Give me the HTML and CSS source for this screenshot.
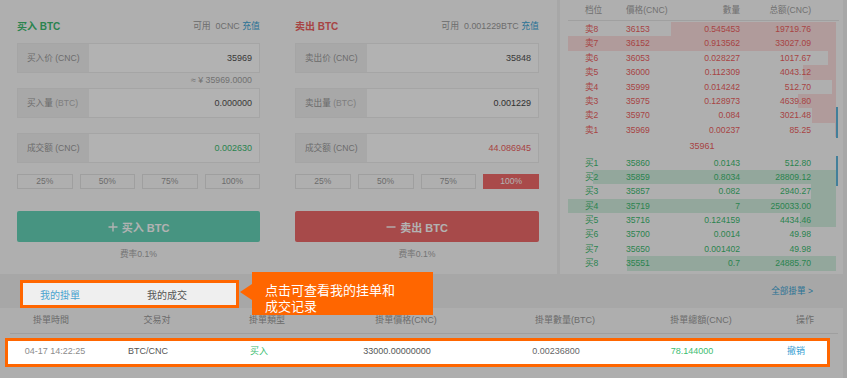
FILE: index.html
```html
<!DOCTYPE html>
<html lang="zh">
<head>
<meta charset="utf-8">
<title>BTC 交易</title>
<link rel="stylesheet" href="styles.css">
</head>
<body>
<div class="page">
  <div class="top">
    <div class="trade">
      <section class="side side-buy">
        <div class="side-head">
          <span class="side-title up">买入 BTC</span>
          <span class="avail">可用 &nbsp;0CNC <span class="link">充值</span></span>
        </div>
        <div class="field"><span class="field-label">买入价 (CNC)</span><span class="field-value">35969</span></div>
        <div class="hint">≈ ¥ 35969.0000</div>
        <div class="field"><span class="field-label">买入量 <span class="unit">(BTC)</span></span><span class="field-value">0.000000</span></div>
        <div class="hint"></div>
        <div class="field"><span class="field-label">成交额 (CNC)</span><span class="field-value up">0.002630</span></div>
        <div class="pcts"><span class="pct">25%</span><span class="pct">50%</span><span class="pct">75%</span><span class="pct">100%</span></div>
        <button class="act act-buy"><svg class="act-icon" viewBox="0 0 10 10" width="10" height="10"><path d="M5 0.5V9.5M0.5 5H9.5" stroke="currentColor" stroke-width="1.4" fill="none"/></svg><span>买入 BTC</span></button>
        <div class="fee">费率0.1%</div>
      </section>
      <section class="side side-sell">
        <div class="side-head">
          <span class="side-title down">卖出 BTC</span>
          <span class="avail">可用 &nbsp;0.001229BTC <span class="link">充值</span></span>
        </div>
        <div class="field"><span class="field-label">卖出价 (CNC)</span><span class="field-value">35848</span></div>
        <div class="hint"></div>
        <div class="field"><span class="field-label">卖出量 <span class="unit">(BTC)</span></span><span class="field-value strong">0.001229</span></div>
        <div class="hint"></div>
        <div class="field"><span class="field-label">成交额 (CNC)</span><span class="field-value down">44.086945</span></div>
        <div class="pcts"><span class="pct">25%</span><span class="pct">50%</span><span class="pct">75%</span><span class="pct pct-on">100%</span></div>
        <button class="act act-sell"><svg class="act-icon" viewBox="0 0 10 10" width="10" height="10"><path d="M0.5 5H9.5" stroke="currentColor" stroke-width="1.4" fill="none"/></svg><span>卖出 BTC</span></button>
        <div class="fee">费率0.1%</div>
      </section>
    </div>

    <div class="book">
      <div class="book-head"><span>档位</span><span>價格(CNC)</span><span class="r">數量</span><span class="r">总额(CNC)</span></div>
      <div class="levels">
        <div class="rows">
          <div class="lv ask" style="--w:61.7%"><span>卖8</span><span>36153</span><span class="r">0.545453</span><span class="r">19719.76</span></div>
          <div class="lv ask" style="--w:100%"><span>卖7</span><span>36152</span><span class="r">0.913562</span><span class="r">33027.09</span></div>
          <div class="lv ask" style="--w:3.1%"><span>卖6</span><span>36053</span><span class="r">0.028227</span><span class="r">1017.67</span></div>
          <div class="lv ask" style="--w:12.2%"><span>卖5</span><span>36000</span><span class="r">0.112309</span><span class="r">4043.12</span></div>
          <div class="lv ask" style="--w:1.5%"><span>卖4</span><span>35999</span><span class="r">0.014242</span><span class="r">512.70</span></div>
          <div class="lv ask" style="--w:14%"><span>卖3</span><span>35975</span><span class="r">0.128973</span><span class="r">4639.80</span></div>
          <div class="lv ask" style="--w:9.1%"><span>卖2</span><span>35970</span><span class="r">0.084</span><span class="r">3021.48</span></div>
          <div class="lv ask" style="--w:0.3%"><span>卖1</span><span>35969</span><span class="r">0.00237</span><span class="r">85.25</span></div>
        </div>
        <div class="track"><div class="thumb thumb-ask"></div></div>
      </div>
      <div class="mid">35961</div>
      <div class="levels">
        <div class="rows">
          <div class="lv bid" style="--w:0%"><span>买1</span><span>35860</span><span class="r">0.0143</span><span class="r">512.80</span></div>
          <div class="lv bid" style="--w:90.7%"><span>买2</span><span>35859</span><span class="r">0.8034</span><span class="r">28809.12</span></div>
          <div class="lv bid" style="--w:9.3%"><span>买3</span><span>35857</span><span class="r">0.082</span><span class="r">2940.27</span></div>
          <div class="lv bid" style="--w:100%"><span>买4</span><span>35719</span><span class="r">7</span><span class="r">250033.00</span></div>
          <div class="lv bid" style="--w:13.4%"><span>买5</span><span>35716</span><span class="r">0.124159</span><span class="r">4434.46</span></div>
          <div class="lv bid" style="--w:0%"><span>买6</span><span>35700</span><span class="r">0.0014</span><span class="r">49.98</span></div>
          <div class="lv bid" style="--w:0%"><span>买7</span><span>35650</span><span class="r">0.001402</span><span class="r">49.98</span></div>
          <div class="lv bid" style="--w:78%"><span>买8</span><span>35551</span><span class="r">0.7</span><span class="r">24885.70</span></div>
        </div>
        <div class="track"><div class="thumb thumb-bid"></div></div>
      </div>
    </div>
  </div>

  <div class="tabbar">
    <div class="tabs spot">
      <span class="tab tab-on">我的掛單</span>
      <span class="tab">我的成交</span>
    </div>
    <div class="guide">点击可查看我的挂单和<br>成交记录</div>
    <span class="all link">全部掛單 &gt;</span>
  </div>

  <div class="orders">
    <div class="order-head">
      <span>掛單時間</span><span>交易对</span><span>掛單類型</span><span>掛單價格(CNC)</span><span>掛單數量(BTC)</span><span>掛單總額(CNC)</span><span>操作</span>
    </div>
    <div class="order-row spot">
      <span class="o-time">04-17 14:22:25</span><span>BTC/CNC</span><span class="up o-type">买入</span><span>33000.00000000</span><span class="o-amt">0.00236800</span><span class="up">78.144000</span><span class="link o-op">撤销</span>
    </div>
  </div>
</div>
<div class="mask"></div>
</body>
</html>
```

FILE: styles.css
```css
* {
  box-sizing: border-box;
  margin: 0;
  padding: 0;
}

html,
body {
  width: 847px;
  height: 378px;
  overflow: hidden;
}

body {
  background: #efefef;
  font-family: "Liberation Sans", "Noto Sans CJK SC", sans-serif;
  font-size: 9px;
  color: #555;
}

.page {
  width: 843px;
}

.up { color: #3dbd72; }
.down { color: #f06262; }
.link { color: #3aa5d6; }

/* ---------- top area ---------- */
.top {
  display: flex;
  gap: 3px;
  height: 274px;
}

.trade {
  width: 557px;
  display: flex;
  background: #fbfbfb;
}

.side {
  padding: 16px 18px 0 17px;
  display: flex;
  flex-direction: column;
}

.side-buy { width: 278px; }
.side-sell { flex: 1; }

.side-head {
  height: 18px;
  display: flex;
  align-items: center;
  justify-content: space-between;
  margin-bottom: 9px;
}

.side-title {
  font-size: 10px;
  font-weight: bold;
}

.avail {
  font-size: 8.9px;
  color: #9c9c9c;
}

.field {
  display: flex;
  height: 30px;
  border: 1px solid #ececec;
  background: #fff;
}

.field-label {
  width: 71px;
  padding-left: 9px;
  background: #f1f1f1;
  color: #9b9b9b;
  font-size: 8.6px;
  line-height: 28px;
}

.unit { color: #b5b5b5; }

.field-value {
  flex: 1;
  text-align: right;
  padding-right: 7px;
  line-height: 28px;
  font-size: 9px;
  color: #525252;
}

.field-value.strong { color: #474747; }
.field-value.up { color: #3dbd72; }
.field-value.down { color: #f06262; }

.hint {
  height: 15px;
  line-height: 14px;
  text-align: right;
  padding-right: 8px;
  font-size: 8.8px;
  color: #a3a3a3;
}

.pcts {
  display: grid;
  grid-template-columns: repeat(4, 1fr);
  gap: 7px;
  margin-top: 11px;
}

.pct {
  height: 15px;
  border: 1px solid #e4e4e4;
  text-align: center;
  line-height: 13px;
  font-size: 8.5px;
  color: #9a9a9a;
}

.pct-on {
  background: #f26a6a;
  border-color: #f26a6a;
  color: #fff;
}

.act {
  display: flex;
  align-items: center;
  justify-content: center;
  gap: 4px;
  width: 100%;
  height: 31px;
  margin-top: 22px;
  border: 0;
  border-radius: 2px;
  color: #fff;
  font-family: "Liberation Sans", "Noto Sans CJK SC", sans-serif;
  font-size: 11px;
  font-weight: bold;
}

.act-icon { display: block; }
.act-buy { background: #66d4b9; }
.act-sell { background: #f06a6a; }

.fee {
  margin-top: 6px;
  line-height: 12px;
  text-align: center;
  font-size: 8.7px;
  color: #a8a8a8;
}

/* ---------- order book ---------- */
.book {
  flex: 1;
  background: #fbfbfb;
  padding: 0 4px 0 8px;
  font-size: 8.6px;
}

.book-head {
  display: grid;
  grid-template-columns: 41px 50px 64px 71px;
  padding-left: 17px;
  height: 21px;
  line-height: 20px;
  border-bottom: 1px solid #e6e6e6;
  color: #a2a2a2;
}

.r { text-align: right; }

.levels {
  display: flex;
  margin-top: 1px;
}

.levels + .mid + .levels { margin-top: 0; }

.rows { width: 268px; }

.track { width: 3px; }

.thumb {
  width: 2px;
  background: #5fb6dd;
}

.thumb-ask { margin-top: 85px; height: 31px; }
.thumb-bid { height: 30px; }

.lv {
  display: grid;
  grid-template-columns: 41px 50px 64px 71px;
  padding-left: 17px;
  height: 14.4px;
  line-height: 14.4px;
}

.ask {
  color: #f06262;
  background: linear-gradient(to left, #fcdede var(--w), transparent var(--w));
}

.bid {
  color: #3dbd72;
  background: linear-gradient(to left, #d3efe0 var(--w), transparent var(--w));
}

.mid {
  width: 268px;
  height: 17.5px;
  line-height: 17.5px;
  text-align: center;
  color: #f06262;
  font-size: 9px;
}

/* ---------- tabs ---------- */
.tabbar {
  position: relative;
  height: 34px;
  padding-top: 6px;
  display: flex;
  align-items: flex-start;
  justify-content: space-between;
}

.tabs {
  margin-left: 20px;
  width: 219px;
  height: 28px;
  border: 3px solid #ff6600;
  background: #efefef;
  display: flex;
  align-items: center;
  gap: 67px;
  padding-left: 17px;
  font-size: 10px;
  color: #555;
}

.tab {
  flex: none;
  white-space: nowrap;
}

.tab-on { color: #4aa3cf; }

.all {
  margin-right: 30px;
  line-height: 22px;
  font-size: 8.6px;
}

.guide {
  position: absolute;
  left: 252px;
  top: -2px;
  width: 181px;
  height: 43px;
  padding: 10px 0 0 13px;
  background: #ff6600;
  color: #fff;
  font-family: "Noto Sans CJK SC", sans-serif;
  font-size: 13px;
  line-height: 16px;
  z-index: 12;
}

.guide::before {
  content: "";
  position: absolute;
  left: -12px;
  top: 12px;
  border-style: solid;
  border-width: 8px 12px 8px 0;
  border-color: transparent #ff6600 transparent transparent;
}

/* ---------- orders ---------- */
.orders {
  height: 70px;
  background: #fafafa;
}

.order-head {
  display: grid;
  grid-template-columns: 82px 130px 90px 188px 130px 142px 66px;
  margin: 0 5px 0 10px;
  height: 26px;
  line-height: 25px;
  border-bottom: 1px solid #e4e4e4;
  text-align: center;
  color: #9a9a9a;
  font-size: 9px;
}

.order-row {
  display: grid;
  grid-template-columns: 94px 92px 124px 158px 160px 112px 79px;
  margin: 4px 13px 0 5px;
  height: 29px;
  line-height: 21px;
  border: 3px solid #ff6600;
  background: #fff;
  text-align: center;
  font-size: 9px;
  color: #555;
}

.o-time { color: #8c8c8c; }
.o-type { text-align: left; padding-left: 56px; }
.o-amt { color: #666; }
.o-op { padding-left: 17px; color: #3d9fd3; }

/* ---------- guide mask ---------- */
.spot {
  position: relative;
  z-index: 11;
}

.mask {
  position: fixed;
  inset: 0;
  background: rgba(0, 0, 0, 0.3);
  z-index: 10;
}
```
